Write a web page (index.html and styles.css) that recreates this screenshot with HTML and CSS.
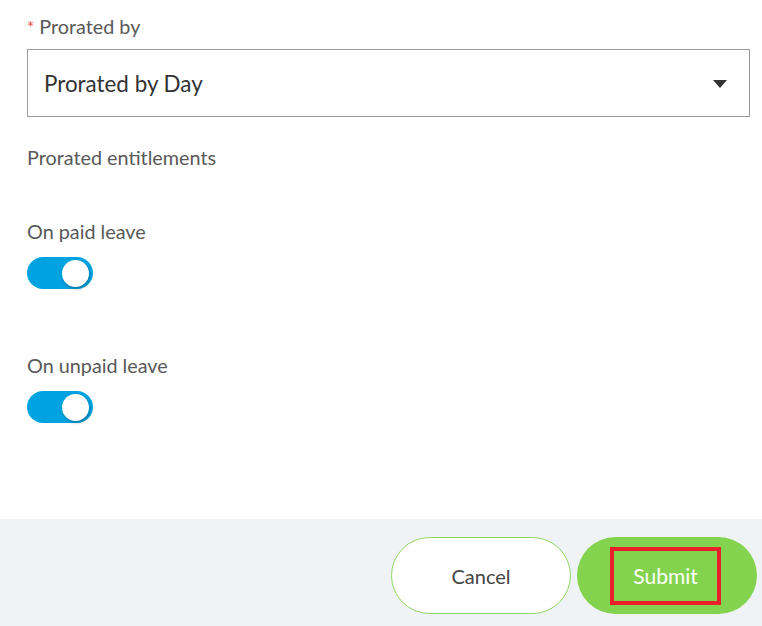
FILE: index.html
```html
<!DOCTYPE html>
<html>
<head>
<meta charset="utf-8">
<link rel="stylesheet" href="styles.css">
</head>
<body>
<div class="page">
  <main class="form">
    <div class="field">
      <div class="label"><span class="req">*</span> Prorated by</div>
      <div class="select">
        <span class="select-value">Prorated by Day</span>
        <svg class="caret" width="14" height="8" viewBox="0 0 14 8"><path d="M0 0H14L7 8Z" fill="#333"/></svg>
      </div>
    </div>
    <div class="section-title">Prorated entitlements</div>
    <div class="toggle-field first">
      <div class="label">On paid leave</div>
      <div class="toggle"><span class="knob"></span></div>
    </div>
    <div class="toggle-field second">
      <div class="label">On unpaid leave</div>
      <div class="toggle"><span class="knob"></span></div>
    </div>
  </main>
  <footer class="footer">
    <button class="btn btn-cancel">Cancel</button>
    <button class="btn btn-submit"><span class="highlight">Submit</span></button>
  </footer>
</div>
</body>
</html>
```
FILE: styles.css
```css
html, body {
  margin: 0;
  padding: 0;
  background: #fff;
}
body {
  font-family: "Lato", "Open Sans", sans-serif;
  color: #555;
  width: 762px;
  height: 626px;
  overflow: hidden;
}
.page {
  display: flex;
  flex-direction: column;
  height: 626px;
}
.form {
  flex: 1;
  padding: 14px 12px 0 27px;
}
.label {
  font-size: 19.8px;
  line-height: 24px;
  color: #595959;
}
.req {
  color: #e8504a;
  font-size: 17px;
}
.select {
  margin-top: 9px;
  height: 66px;
  border: 1px solid #9a9a9a;
  display: flex;
  align-items: center;
  justify-content: space-between;
  padding: 0 22px 0 16px;
}
.select-value {
  font-size: 22.4px;
  color: #333;
}
.caret {
  display: block;
  margin-top: 2px;
}
.section-title {
  margin-top: 28px;
  font-size: 19.8px;
  line-height: 24px;
  color: #595959;
}
.toggle-field.first {
  margin-top: 50px;
}
.toggle-field.second {
  margin-top: 64px;
}
.toggle {
  margin-top: 14px;
  width: 66px;
  height: 32px;
  border-radius: 16px;
  background: #00a3e0;
  display: flex;
  align-items: center;
  justify-content: flex-end;
  padding-right: 4px;
  box-sizing: border-box;
}
.knob {
  width: 27px;
  height: 27px;
  border-radius: 50%;
  background: #fff;
  box-shadow: 1px 2px 3px rgba(0,0,0,0.25);
}
.footer {
  height: 107px;
  background: #eff3f6;
  display: flex;
  justify-content: flex-end;
  align-items: flex-start;
  gap: 6px;
  padding: 18px 5px 0 0;
  box-sizing: border-box;
}
.btn {
  width: 180px;
  height: 77px;
  border-radius: 39px;
  font-family: "Lato", "Open Sans", sans-serif;
  font-size: 20px;
  display: flex;
  align-items: center;
  justify-content: center;
  cursor: pointer;
  box-sizing: border-box;
}
.btn-cancel {
  background: #fff;
  border: 1px solid #8fd663;
  color: #444;
}
.btn-submit {
  background: #84d34e;
  border: none;
  color: #fff;
  font-size: 21px;
}
.highlight {
  width: 103px;
  height: 50px;
  margin-left: -3px;
  border: 4px solid #e8202a;
  display: flex;
  align-items: center;
  justify-content: center;
}
```
